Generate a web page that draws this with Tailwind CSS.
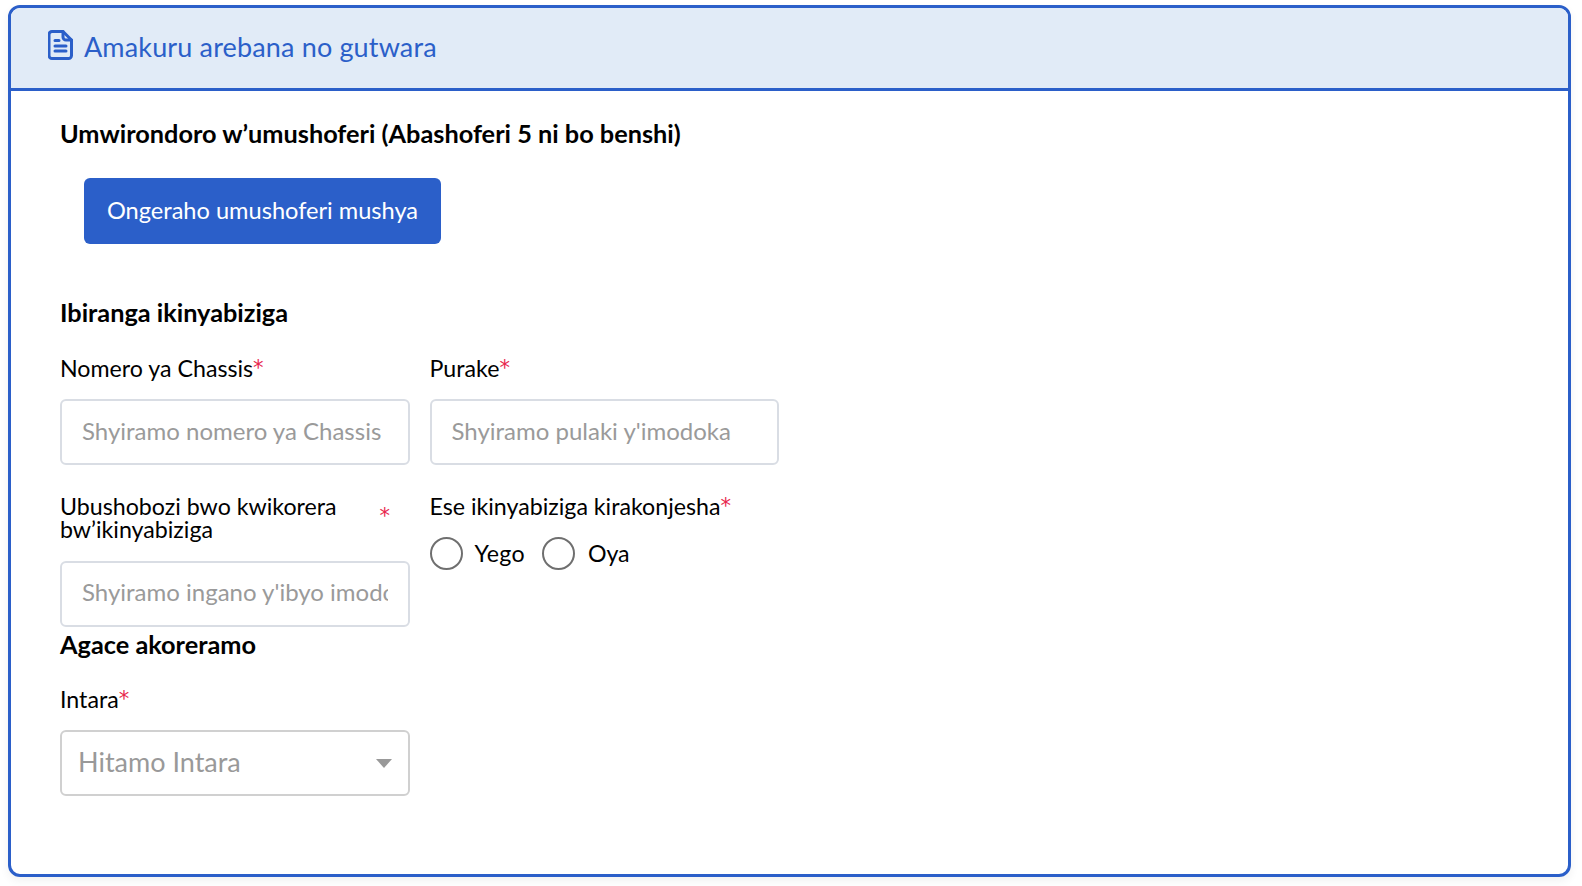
<!DOCTYPE html>
<html lang="en">
<head>
    <meta charset="UTF-8">
    <title>Amakuru arebana no gutwara</title>
    <script src="https://cdn.jsdelivr.net/npm/@tailwindcss/browser@4"></script>
</head>
<body class="bg-white h-[886px] overflow-hidden font-['Lato',sans-serif] text-black">
    <div class="ml-[8px] mt-[5px] w-[1563px] h-[872px] border-[3px] border-[#2b5fc9] rounded-[12px] overflow-hidden shadow-[0_4px_10px_rgba(0,0,0,0.06)]">
        <!-- header -->
        <div class="h-[83px] bg-[#e1ebf7] border-b-[3px] border-[#2b5fc9] flex items-center pl-[37px] text-[#2b5fc9]">
            <svg class="w-[25px] h-[30px] mr-[11px] mb-[6px]" viewBox="0 0 25 30" fill="none" stroke="currentColor" stroke-width="3" stroke-linejoin="round" stroke-linecap="round">
                <path d="M4 1.500h11l8.500 8.500v15.500a3 3 0 0 1-3 3h-16.500a3 3 0 0 1-3-3v-21a3 3 0 0 1 3-3z"/>
                <path d="M15 1.500v5.500a3 3 0 0 0 3 3h5.500"/>
                <path d="M7 10.500h4M7 16h11M7 21h11"/>
            </svg>
            <span class="text-[27px] tracking-[0.150px] mb-[2px]">Amakuru arebana no gutwara</span>
        </div>

        <div class="pl-[49px] pt-[27px]">
            <h2 class="text-[25.300px] leading-[30px] font-bold">Umwirondoro w’umushoferi (Abashoferi 5 ni bo benshi)</h2>
            <button class="mt-[30px] ml-[24px] w-[357px] h-[66px] bg-[#2b5fc9] text-white text-[23.600px] rounded-[6px]">Ongeraho umushoferi mushya</button>

            <h2 class="mt-[53px] text-[25.300px] leading-[30px] font-bold">Ibiranga ikinyabiziga</h2>

            <div class="mt-[29px] grid grid-cols-[350px_349.500px] gap-x-[19.500px] w-[719px]">
                <div>
                    <label class="block text-[23.200px] leading-[24px] h-[24px]">Nomero ya Chassis<span class="font-['DejaVu_Sans'] text-[21px] leading-none align-[2px] text-[#e8264d]">*</span></label>
                    <input class="mt-[19px] w-full h-[66px] px-[20px] pb-[4px] border-2 border-[#d9dde4] rounded-[6px] text-[24px] placeholder:text-[#9a9a9a]" placeholder="Shyiramo nomero ya Chassis">
                </div>
                <div>
                    <label class="block text-[23.200px] leading-[24px] h-[24px]">Purake<span class="font-['DejaVu_Sans'] text-[21px] leading-none align-[2px] text-[#e8264d]">*</span></label>
                    <input class="mt-[19px] w-full h-[66px] px-[20px] pb-[4px] border-2 border-[#d9dde4] rounded-[6px] text-[24px] placeholder:text-[#9a9a9a]" placeholder="Shyiramo pulaki y'imodoka">
                </div>
                <div class="mt-[30px]">
                    <label class="flex items-center justify-between pr-[20px] text-[23.200px] leading-[23px]"><span class="w-[310px]">Ubushobozi bwo kwikorera bw’ikinyabiziga</span><span class="font-['DejaVu_Sans'] text-[21px] leading-none mb-[4px] text-[#e8264d]">*</span></label>
                    <input class="mt-[20px] w-full h-[66px] px-[20px] pb-[6px] border-2 border-[#d9dde4] rounded-[6px] text-[24px] placeholder:text-[#9a9a9a]" placeholder="Shyiramo ingano y'ibyo imodoka yikorera">
                </div>
                <div class="mt-[30px]">
                    <label class="block text-[23.200px] leading-[23px]">Ese ikinyabiziga kirakonjesha<span class="font-['DejaVu_Sans'] text-[21px] leading-none align-[2px] text-[#e8264d]">*</span></label>
                    <div class="mt-[18px] flex items-center text-[23.200px]">
                        <span class="w-[33px] h-[33px] rounded-full border-2 border-[#6f6f6f]"></span>
                        <span class="ml-[12px] tracking-[0.300px]">Yego</span>
                        <span class="ml-[17px] w-[33px] h-[33px] rounded-full border-2 border-[#6f6f6f]"></span>
                        <span class="ml-[13px]">Oya</span>
                    </div>
                </div>
            </div>

            <h2 class="mt-[2px] text-[25.300px] leading-[30px] font-bold">Agace akoreramo</h2>
            <label class="block mt-[28px] text-[23.200px] leading-[24px]">Intara<span class="font-['DejaVu_Sans'] text-[21px] leading-none align-[2px] text-[#e8264d]">*</span></label>
            <div class="mt-[19px] w-[350px] h-[66px] pl-[16px] pr-[16px] pb-[2px] border-2 border-[#d0d0d0] rounded-[6px] flex items-center justify-between text-[27px] text-[#999999]">
                <span>Hitamo Intara</span>
                <span class="w-0 h-0 border-x-[8px] border-x-transparent border-t-[9px] border-t-[#999999] mt-[2px]"></span>
            </div>
        </div>
    </div>
</body>
</html>
